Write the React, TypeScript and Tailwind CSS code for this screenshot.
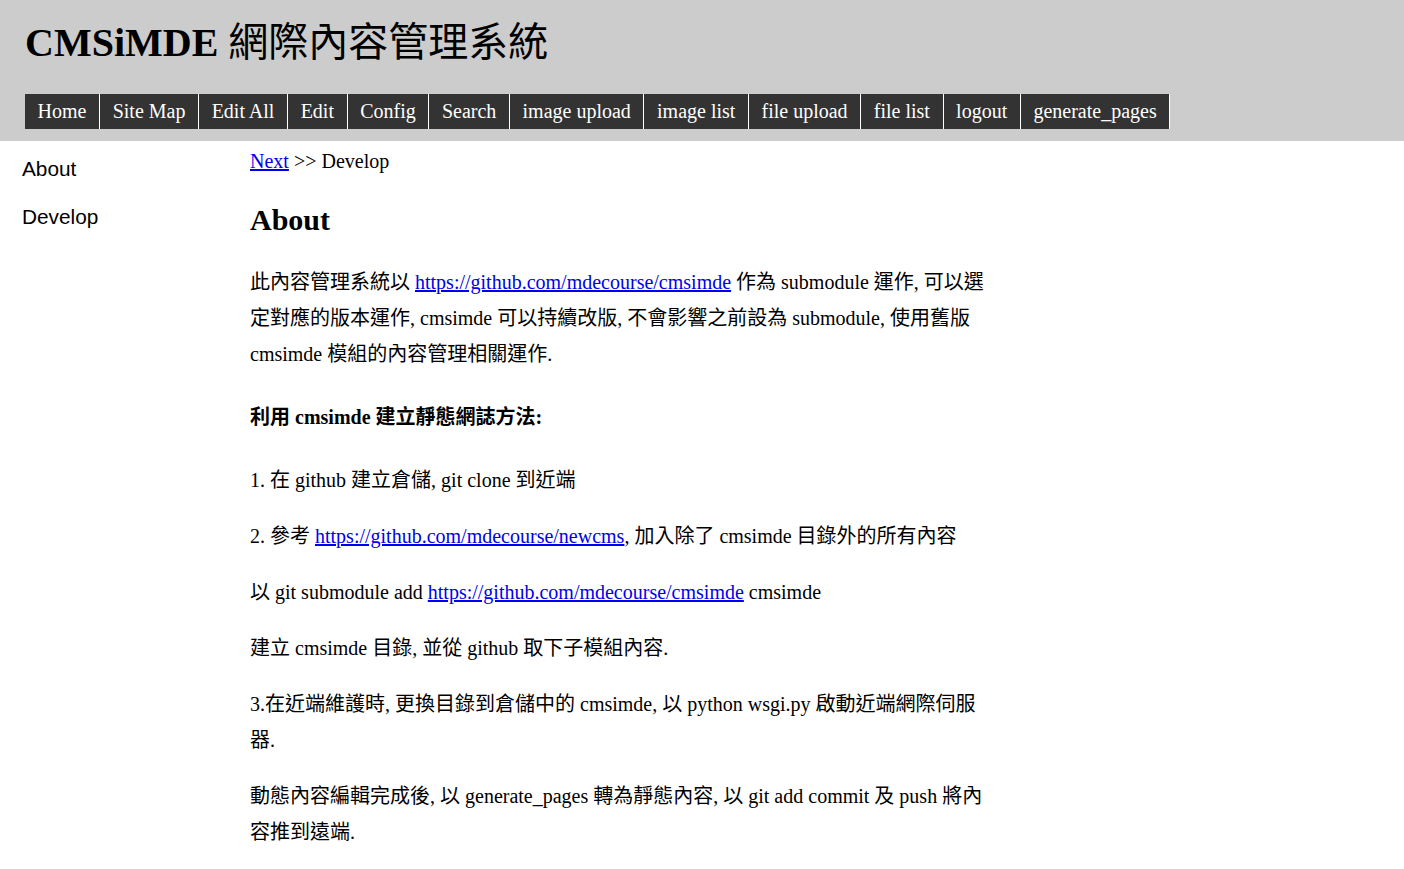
import React from "react";

const serif = "font-['Liberation_Serif','Noto_Sans_CJK_TC',serif]";
const navItems = [
  "Home",
  "Site Map",
  "Edit All",
  "Edit",
  "Config",
  "Search",
  "image upload",
  "image list",
  "file upload",
  "file list",
  "logout",
  "generate_pages",
];

function A({ children }: { children: React.ReactNode }) {
  return (
    <a href="#" className="text-[#0000ee] underline">
      {children}
    </a>
  );
}

export default function App() {
  return (
    <div className={`min-h-[869px] bg-white text-black ${serif}`}>
      <header className="bg-[#cccccc] pl-[25px] pt-[20px] pb-[12px]">
        <h1 className="text-[40px] leading-[46px] font-bold">
          CMSiMDE <span className="font-normal">網際內容管理系統</span>
        </h1>
        <nav className="mt-[28px] flex">
          {navItems.map((n) => (
            <a
              key={n}
              href="#"
              className="bg-[#333333] text-white text-[20px] leading-[23px] py-[6px] px-[12.6px] border-r border-white"
            >
              {n}
            </a>
          ))}
        </nav>
      </header>
      <div className="flex">
        <aside className="w-[250px] shrink-0 pl-[22px] pt-[16px] font-['Liberation_Sans',sans-serif] text-[20.8px] leading-[24px] flex flex-col gap-[24px]">
          <div>About</div>
          <div>Develop</div>
        </aside>
        <main className="w-[740px] pt-[8px] text-[20px]">
          <div className="leading-[24px]">
            <A>Next</A> &gt;&gt; Develop
          </div>
          <h2 className="mt-[29px] text-[30px] leading-[36px] font-bold">About</h2>
          <div className="leading-[36px]">
            <p className="mt-[26px]">
              此內容管理系統以 <A>https://github.com/mdecourse/cmsimde</A> 作為 submodule 運作, 可以選定對應的版本運作, cmsimde 可以持續改版, 不會影響之前設為 submodule, 使用舊版 cmsimde 模組的內容管理相關運作.
            </p>
            <h3 className="mt-[27px] font-bold">利用 cmsimde 建立靜態網誌方法:</h3>
            <p className="mt-[27px]">1. 在 github 建立倉儲, git clone 到近端</p>
            <p className="mt-[20px]">
              2. 參考 <A>https://github.com/mdecourse/newcms</A>, 加入除了 cmsimde 目錄外的所有內容
            </p>
            <p className="mt-[20px]">
              以 git submodule add <A>https://github.com/mdecourse/cmsimde</A> cmsimde
            </p>
            <p className="mt-[20px]">建立 cmsimde 目錄, 並從 github 取下子模組內容.</p>
            <p className="mt-[20px]">
              3.在近端維護時, 更換目錄到倉儲中的 cmsimde, 以 python wsgi.py 啟動近端網際伺服器.
            </p>
            <p className="mt-[20px]">
              動態內容編輯完成後, 以 generate_pages 轉為靜態內容, 以 git add commit 及 push 將內容推到遠端.
            </p>
          </div>
        </main>
      </div>
    </div>
  );
}
